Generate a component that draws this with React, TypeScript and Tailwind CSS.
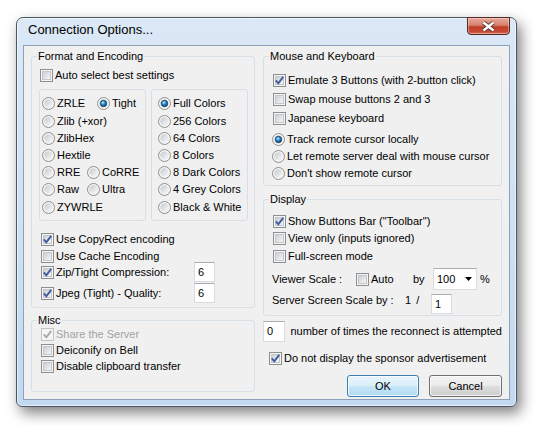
import React from 'react'

type Kids = { children?: React.ReactNode; className?: string }

function Check({ on = false, disabled = false }: { on?: boolean; disabled?: boolean }) {
  return (
    <svg width="13" height="13" viewBox="0 0 13 13" className="shrink-0">
      <defs>
        <linearGradient id="chkIn" x1="0" y1="0" x2="1" y2="1">
          <stop offset="0" stopColor="#c8ccd2" />
          <stop offset="1" stopColor="#f8f8f8" />
        </linearGradient>
      </defs>
      <rect x="0.5" y="0.5" width="12" height="12" fill="#f5f5f5" stroke={disabled ? '#c4c4c4' : '#8e8f8f'} />
      {!disabled && <rect x="2.5" y="2.5" width="8" height="8" fill="url(#chkIn)" stroke="#c3c6cb" />}
      {on && (
        <path
          d="M2.8 6.4 L5.3 9.3 L10.2 2.9"
          fill="none"
          stroke={disabled ? '#a9a9a9' : '#3f5a9e'}
          strokeWidth="1.9"
        />
      )}
    </svg>
  )
}

function Radio({ on = false }: { on?: boolean }) {
  return (
    <svg width="13" height="13" viewBox="0 0 13 13" className="shrink-0">
      <defs>
        <linearGradient id="rdIn" x1="0" y1="0" x2="1" y2="1">
          <stop offset="0" stopColor="#c6c9ce" />
          <stop offset="1" stopColor="#fafafa" />
        </linearGradient>
        <radialGradient id="rdDot" cx="0.4" cy="0.35" r="0.7">
          <stop offset="0" stopColor="#b8edff" />
          <stop offset="0.45" stopColor="#2b8cd4" />
          <stop offset="1" stopColor="#0b3560" />
        </radialGradient>
      </defs>
      <circle cx="6.5" cy="6.5" r="6" fill="#f4f4f4" stroke="#8e8f8f" />
      <circle cx="6.5" cy="6.5" r="4.2" fill="url(#rdIn)" />
      {on && <circle cx="6.5" cy="6.5" r="3.2" fill="url(#rdDot)" stroke="#1a3b5c" strokeWidth="0.8" />}
    </svg>
  )
}

function C({ label, on, disabled, className = '' }: { label: string; on?: boolean; disabled?: boolean; className?: string }) {
  return (
    <div className={`flex items-center ${className}`}>
      <Check on={on} disabled={disabled} />
      <span className={`ml-[2px] whitespace-nowrap ${disabled ? 'text-[#a3a3a3]' : ''}`}>{label}</span>
    </div>
  )
}

function R({ label, on, className = '' }: { label: string; on?: boolean; className?: string }) {
  return (
    <div className={`flex items-center ${className}`}>
      <Radio on={on} />
      <span className="ml-[2px] whitespace-nowrap">{label}</span>
    </div>
  )
}

function Field({ value, className = '' }: { value: string; className?: string }) {
  return (
    <div className={`flex items-center border border-[#d8dbe0] border-t-[#abadb3] bg-white pl-[3px] ${className}`}>
      {value}
    </div>
  )
}

function Group({ title, className = '', children }: Kids & { title: string }) {
  return (
    <fieldset className={`min-w-0 rounded-[3px] border border-[#d5dfe5] ${className}`}>
      <legend className="ml-[5px] px-[1px] leading-[13px]">{title}</legend>
      {children}
    </fieldset>
  )
}

function CloseX() {
  return (
    <svg width="15" height="11" viewBox="0 0 15 11">
      <path d="M2.5 1.5 L12.5 9.5 M12.5 1.5 L2.5 9.5" stroke="#5a3a34" strokeWidth="4.2" />
      <path d="M2.5 1.5 L12.5 9.5 M12.5 1.5 L2.5 9.5" stroke="#ffffff" strokeWidth="2.4" />
    </svg>
  )
}

export default function App() {
  return (
    <div className="h-[426px] w-[534px] overflow-hidden bg-white pl-[16px] pt-[17px] font-['Liberation_Sans',Arial,sans-serif] text-[11px] leading-[13px] text-black">
      <div className="flex h-[390px] w-[501px] flex-col rounded-t-[7px] rounded-b-[6px] border border-[#4b5663] bg-gradient-to-b from-[#dbe8f6] via-[#cfe1f4] to-[#c2d9f1] px-[6px] pb-[6px] shadow-[4px_6px_14px_rgba(0,0,0,0.5),inset_0_0_0_1px_rgba(255,255,255,0.6)]">
        {/* title bar */}
        <div className="flex h-[27px] items-start">
          <span className="ml-[5px] mt-[4px] text-[13px] leading-[16px]">Connection Options...</span>
          <div className="ml-auto -mt-px flex h-[18px] w-[43px] items-center justify-center rounded-b-[4px] border border-[#5b2821] bg-[linear-gradient(#e7a99b_0%,#d9806d_45%,#c23f28_55%,#c54a33_85%,#d9785f_100%)] shadow-[inset_0_0_0_1px_rgba(255,255,255,0.35)]">
            <CloseX />
          </div>
        </div>

        {/* client area */}
        <div className="flex flex-1 gap-[8px] border border-[#8da2b8] bg-[#f0f0f0] px-[7px] pt-[4px]">
          {/* left column */}
          <div className="flex w-[224px] flex-col">
            <Group title="Format and Encoding">
              <div className="flex flex-col pb-[4px]">
                <C label="Auto select best settings" className="ml-[8px] mt-[5px] h-[14px]" />
                <div className="ml-[7px] mt-[7px] flex gap-[5px]">
                  <div className="flex w-[107px] flex-col rounded-[3px] border border-[#d5dfe5] py-[4px] pl-[2px]">
                    <div className="flex h-[18px] items-center">
                      <R label="ZRLE" className="w-[55px]" />
                      <R label="Tight" on />
                    </div>
                    <R label="Zlib (+xor)" className="h-[18px]" />
                    <R label="ZlibHex" className="h-[17px]" />
                    <R label="Hextile" className="h-[17px]" />
                    <div className="flex h-[17px] items-center">
                      <R label="RRE" className="w-[45px]" />
                      <R label="CoRRE" />
                    </div>
                    <div className="flex h-[17px] items-center">
                      <R label="Raw" className="w-[45px]" />
                      <R label="Ultra" />
                    </div>
                    <R label="ZYWRLE" className="h-[18px]" />
                  </div>
                  <div className="flex w-[97px] flex-col rounded-[3px] border border-[#d5dfe5] py-[4px] pl-[6px]">
                    <R label="Full Colors" on className="h-[18px]" />
                    <R label="256 Colors" className="h-[18px]" />
                    <R label="64 Colors" className="h-[17px]" />
                    <R label="8 Colors" className="h-[17px]" />
                    <R label="8 Dark Colors" className="h-[17px]" />
                    <R label="4 Grey Colors" className="h-[17px]" />
                    <R label="Black & White" className="h-[18px]" />
                  </div>
                </div>
                <C label="Use CopyRect encoding" on className="ml-[9px] mt-[10px] h-[17px]" />
                <C label="Use Cache Encoding" className="ml-[9px] h-[16px]" />
                <div className="-mt-[2px] ml-[9px] flex h-[20px] items-center">
                  <C label="Zip/Tight Compression:" on className="w-[153px]" />
                  <Field value="6" className="h-[20px] w-[21px]" />
                </div>
                <div className="ml-[9px] mt-[1px] flex h-[20px] items-center">
                  <C label="Jpeg (Tight) - Quality:" on className="w-[153px]" />
                  <Field value="6" className="h-[20px] w-[21px]" />
                </div>
              </div>
            </Group>

            <Group title="Misc" className="mt-[6px] h-[78px]">
              <div className="-mt-px flex flex-col pl-[9px]">
                <C label="Share the Server" on disabled className="h-[16px]" />
                <C label="Deiconify on Bell" className="h-[16px]" />
                <C label="Disable clipboard transfer" className="h-[16px]" />
              </div>
            </Group>
          </div>

          {/* right column */}
          <div className="flex w-[239px] flex-col">
            <Group title="Mouse and Keyboard">
              <div className="flex flex-col pb-[3px] pl-[9px]">
                <C label="Emulate 3 Buttons (with 2-button click)" on className="mt-[8px] h-[19px]" />
                <C label="Swap mouse buttons 2 and 3" className="h-[19px]" />
                <C label="Japanese keyboard" className="h-[19px]" />
                <R label="Track remote cursor locally" on className="-ml-px mt-[3px] h-[17px]" />
                <R label="Let remote server deal with mouse cursor" className="-ml-px h-[17px]" />
                <R label="Don't show remote cursor" className="-ml-px h-[17px]" />
              </div>
            </Group>

            <Group title="Display" className="mt-[7px]">
              <div className="flex flex-col pb-[1px] pl-[9px]">
                <C label='Show Buttons Bar ("Toolbar")' on className="mt-[6px] h-[18px]" />
                <C label="View only (inputs ignored)" className="h-[17px]" />
                <C label="Full-screen mode" className="h-[18px]" />
                <div className="-ml-px mt-[3px] flex h-[22px] items-center">
                  <span className="w-[84px] whitespace-nowrap">Viewer Scale :</span>
                  <C label="Auto" className="w-[57px]" />
                  <span className="w-[20px]">by</span>
                  <div className="flex h-[22px] w-[44px] items-center border border-[#d8dbe0] border-t-[#abadb3] bg-white pl-[3px]">
                    <span>100</span>
                    <svg className="ml-auto mr-[4px]" width="7" height="4" viewBox="0 0 7 4">
                      <path d="M0 0 H7 L3.5 4 Z" fill="#000" />
                    </svg>
                  </div>
                  <span className="ml-[3px]">%</span>
                </div>
                <div className="-ml-px mt-[4px] flex h-[20px] items-start">
                  <span className="w-[133px] whitespace-nowrap">Server Screen Scale by :</span>
                  <span className="flex w-[26px]">
                    1<span className="ml-[5px]">/</span>
                  </span>
                  <Field value="1" className="h-[20px] w-[21px]" />
                </div>
              </div>
            </Group>

            <div className="mt-[5px] flex items-center">
              <Field value="0" className="h-[21px] w-[25px]" />
              <span className="ml-[5px] whitespace-nowrap">number of times the reconnect is attempted</span>
            </div>

            <C label="Do not display the sponsor advertisement" on className="ml-[6px] mt-[8px] h-[16px]" />

            <div className="mt-[9px] flex justify-end gap-[10px]">
              <button className="flex h-[22px] w-[72px] items-center justify-center rounded-[3px] border border-[#3c7fb1] bg-[linear-gradient(#e8f4fc_0%,#dbeefa_50%,#c6e5f8_50%,#b3dbf3_100%)] shadow-[inset_0_0_0_1px_rgba(255,255,255,0.75)]">
                OK
              </button>
              <button className="flex h-[22px] w-[73px] items-center justify-center rounded-[3px] border border-[#707070] bg-[linear-gradient(#f2f2f2_0%,#ebebeb_50%,#dddddd_50%,#cfcfcf_100%)] shadow-[inset_0_0_0_1px_rgba(255,255,255,0.7)]">
                Cancel
              </button>
            </div>
          </div>
        </div>
      </div>
    </div>
  )
}
